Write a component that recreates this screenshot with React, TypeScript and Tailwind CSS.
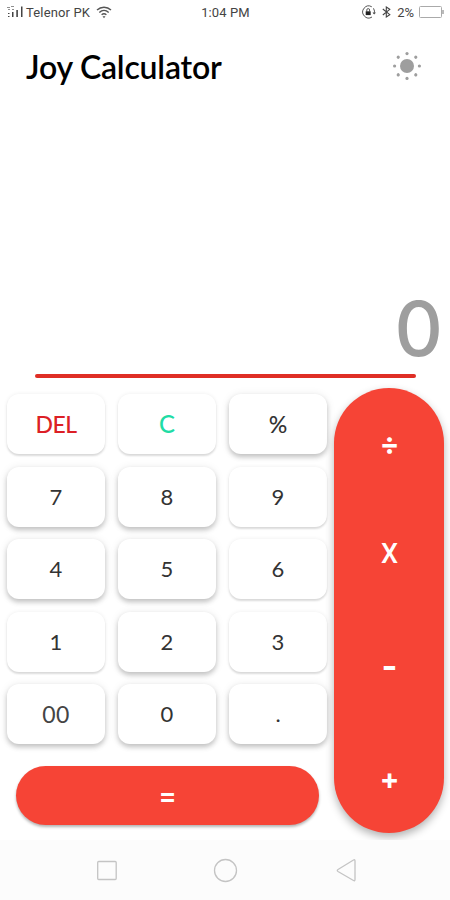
import { useState } from "react";
import clsx from "clsx";

type Key = {
  label: string;
  style?: string;
  raised?: boolean;
};

const keys: Key[] = [
  { label: "DEL", style: "text-[#dc1f26] text-[23px] font-medium tracking-[-0.5px]" },
  { label: "C", style: "text-[#20dca5] text-[24px] font-medium" },
  { label: "%", style: "text-[#333] text-[23px] font-medium", raised: true },
  { label: "7", raised: true },
  { label: "8", raised: true },
  { label: "9" },
  { label: "4", raised: true },
  { label: "5", raised: true },
  { label: "6" },
  { label: "1" },
  { label: "2", raised: true },
  { label: "3" },
  { label: "00", style: "text-[#444] text-[23px] tracking-[0.5px]", raised: true },
  { label: "0", raised: true },
  { label: ".", raised: true },
];

const operators = [
  { label: "÷", style: "font-[Inter,sans-serif] text-[29px] font-bold" },
  { label: "X", style: "font-[Roboto,sans-serif] text-[27px] font-medium" },
  { label: "-", style: "font-[Inter,sans-serif] text-[34px] font-bold" },
  { label: "+", style: "font-[Inter,sans-serif] text-[29px] font-bold pt-1" },
];

const StatusBar = () => (
  <div className="grid h-6 grid-cols-3 items-center pl-[7px] pr-[6px] font-[Roboto,sans-serif] text-[13px] leading-none text-[#444]">
    <div className="flex items-center">
      <svg width="19" height="14" viewBox="0 0 19 14" fill="#444">
        <path d="M0 2h3v1H0zM4 1h3v1H4zM1 4h2v1H1zM5 4h2v1H5z" opacity=".6" />
        <path d="M1 8h1.500v1H1zM1 11h1.500v1H1zM5 7h1.500v5H5zM9.300 5h1.600v7H9.300zM14 1.500h1.500V12H14z" />
      </svg>
      <span className="whitespace-nowrap tracking-[0.15px]">Telenor PK</span>
      <svg
        className="ml-[6px] shrink-0"
        width="16"
        height="13"
        viewBox="0 0 16 13"
        fill="none"
        stroke="#555"
        strokeWidth="1.4"
      >
        <path d="M1 4C5 .3 11 .3 15 4M3.300 6.500c2.800-2.600 6.600-2.600 9.400 0M5.600 8.800c1.500-1.300 3.300-1.300 4.800 0" />
        <path d="m8 12.300 1.500-2h-3z" fill="#555" stroke="none" />
      </svg>
    </div>
    <span className="text-center tracking-[0.1px]">1:04 PM</span>
    <div className="flex items-center justify-end">
      <svg width="16" height="14" viewBox="0 0 16 14" fill="none" stroke="#555">
        <path d="M10.800 1.800A6 6 0 1 0 11 12M12.500 3.300A6 6 0 0 1 13 9" />
        <path d="m11.500 7.500 1.700 2L15 7.500z" fill="#555" stroke="none" />
        <path d="M5.800 6.500V5a1.400 1.400 0 0 1 2.800 0v1.500" />
        <path d="M4.700 6.300h5v3.800h-5z" fill="#222" stroke="none" />
      </svg>
      <svg
        className="ml-[5px]"
        width="9"
        height="12"
        viewBox="0 0 9 12"
        fill="none"
        stroke="#444"
        strokeWidth="1.1"
      >
        <path d="m.8 3 7 5.600L4.300 11V1l3.500 2.400-7 5.600" />
      </svg>
      <span className="ml-[6px]">2%</span>
      <svg
        className="ml-[5px]"
        width="25"
        height="13"
        viewBox="0 0 25 13"
        fill="none"
        stroke="#aaa"
      >
        <rect x=".5" y=".5" width="22" height="11" rx="1" />
        <path d="M24 4v4" stroke="#777" />
      </svg>
    </div>
  </div>
);

const SunIcon = () => (
  <svg width="30" height="30" viewBox="0 0 30 30" fill="#9e9e9e">
    <circle cx="15" cy="15" r="7" />
    {[0, 45, 90, 135, 180, 225, 270, 315].map((angle) => (
      <circle
        key={angle}
        cx="15"
        cy="2.6"
        r="1.6"
        transform={`rotate(${angle} 15 15)`}
      />
    ))}
  </svg>
);

const App = () => {
  const [value, setValue] = useState("0");

  const handlePress = (label: string) => {
    if (label === "C") {
      setValue("0");
    } else if (label === "DEL") {
      setValue(value.length > 1 ? value.slice(0, -1) : "0");
    } else if (label === "%") {
      setValue(String(parseFloat(value) / 100));
    } else if (label === ".") {
      if (!value.includes(".")) setValue(value + ".");
    } else {
      setValue(value === "0" ? String(Number(label)) : value + label);
    }
  };

  return (
    <main className="flex h-[900px] w-[450px] flex-col overflow-hidden bg-white font-[Lato,sans-serif]">
      <StatusBar />

      <header className="flex h-[84px] items-center justify-between pl-[26px] pr-7">
        <h1 className="pt-[2px] text-[32px] font-semibold leading-none tracking-[-0.2px] text-black">
          Joy Calculator
        </h1>
        <button aria-label="Theme">
          <SunIcon />
        </button>
      </header>

      <section className="flex h-[266px] flex-col justify-end">
        <div className="pr-[7px] text-right font-[Inter,sans-serif] text-[75px] font-medium leading-[91px] text-[#9e9e9e]">
          {value}
        </div>
      </section>
      <div className="ml-[35px] h-[4px] w-[381px] rounded-full bg-[#df2e25]" />

      <section className="flex h-[462px] pt-[10px]">
        <div className="w-[334px]">
          <div className="grid grid-cols-[98px_98px_98px] gap-x-[13px] gap-y-[12.6px] pl-[7px] pt-[6px]">
            {keys.map((key) => (
              <button
                key={key.label}
                onClick={() => handlePress(key.label)}
                className={clsx(
                  "h-[60px] rounded-[12px] bg-white leading-none",
                  key.style ?? "text-[22px] text-[#333]",
                  key.raised
                    ? "shadow-[0_3px_5px_rgba(0,0,0,0.2),0_1px_10px_rgba(0,0,0,0.09)]"
                    : "shadow-[0_2px_2px_rgba(0,0,0,0.12),0_0_4px_rgba(0,0,0,0.07)]"
                )}
              >
                {key.label}
              </button>
            ))}
          </div>
          <button className="ml-4 mt-[22px] h-[59px] w-[303px] rounded-full bg-[#f64436] font-[Inter,sans-serif] text-[27px] font-semibold leading-none text-white shadow-[0_2px_3px_rgba(0,0,0,0.3)]">
            =
          </button>
        </div>
        <div className="flex h-[445px] w-[110px] flex-col items-center rounded-full bg-[#f64436] text-white shadow-[0_4px_8px_rgba(0,0,0,0.3)]">
          {operators.map((operator) => (
            <button
              key={operator.label}
              className={clsx("h-[111px] w-full pl-px leading-none", operator.style)}
            >
              {operator.label}
            </button>
          ))}
        </div>
      </section>

      <nav className="flex h-[60px] items-center bg-[#fcfcfc]">
        <svg
          width="450"
          height="60"
          viewBox="0 0 450 60"
          fill="none"
          stroke="#c4c4c4"
          strokeWidth="1.3"
        >
          <rect x="97.7" y="21.5" width="18.5" height="18" rx="1" />
          <circle cx="225.5" cy="30.5" r="11" />
          <path
            d="M338 29.500 353.500 20q1.500-.8 1.500 1v18.500q0 1.800-1.500 1L338 31.500q-1.500-1 0-2Z"
            strokeLinejoin="round"
          />
        </svg>
      </nav>
    </main>
  );
};

export default App;
